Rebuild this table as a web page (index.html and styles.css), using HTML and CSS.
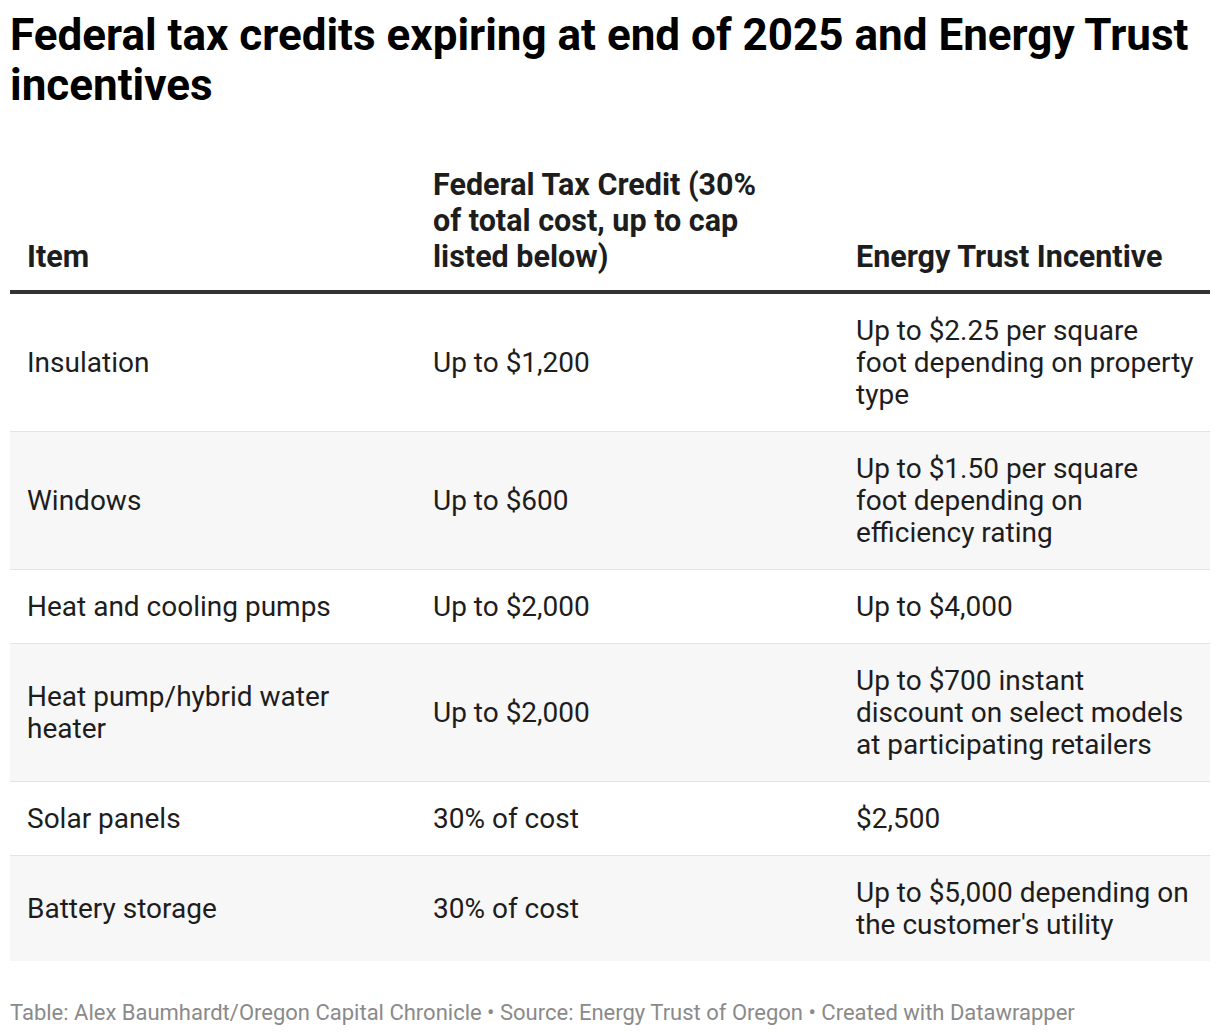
FILE: index.html
```html
<!DOCTYPE html>
<html lang="en">
<head>
<meta charset="utf-8">
<title>Federal tax credits expiring at end of 2025 and Energy Trust incentives</title>
<link rel="stylesheet" href="styles.css">
</head>
<body>
<div class="chart">
  <h1 class="title">Federal tax credits expiring at end of 2025 and Energy Trust incentives</h1>
  <div class="table">
    <div class="row head">
      <div class="cell c1">Item</div>
      <div class="cell c2"><span class="wrap">Federal Tax Credit (30% of total cost, up to cap listed below)</span></div>
      <div class="cell c3">Energy Trust Incentive</div>
    </div>
    <div class="row">
      <div class="cell c1">Insulation</div>
      <div class="cell c2">Up to $1,200</div>
      <div class="cell c3">Up to $2.25 per square foot depending on property type</div>
    </div>
    <div class="row alt">
      <div class="cell c1">Windows</div>
      <div class="cell c2">Up to $600</div>
      <div class="cell c3">Up to $1.50 per square foot depending on efficiency rating</div>
    </div>
    <div class="row">
      <div class="cell c1">Heat and cooling pumps</div>
      <div class="cell c2">Up to $2,000</div>
      <div class="cell c3">Up to $4,000</div>
    </div>
    <div class="row alt">
      <div class="cell c1">Heat pump/hybrid water heater</div>
      <div class="cell c2">Up to $2,000</div>
      <div class="cell c3">Up to $700 instant discount on select models at participating retailers</div>
    </div>
    <div class="row">
      <div class="cell c1">Solar panels</div>
      <div class="cell c2">30% of cost</div>
      <div class="cell c3">$2,500</div>
    </div>
    <div class="row alt last">
      <div class="cell c1">Battery storage</div>
      <div class="cell c2">30% of cost</div>
      <div class="cell c3">Up to $5,000 depending on the customer's utility</div>
    </div>
  </div>
  <div class="footer">Table: Alex Baumhardt/Oregon Capital Chronicle • Source: Energy Trust of Oregon • Created with Datawrapper</div>
</div>
</body>
</html>
```
FILE: styles.css
```css
html, body {
  margin: 0;
  padding: 0;
  background: #ffffff;
}
body {
  font-family: Roboto, "Liberation Sans", Arial, sans-serif;
  color: #1d1d1d;
}
.chart {
  padding: 10px 10px 0 10px;
  width: 1200px;
}
.title {
  margin: 0;
  font-size: 44px;
  line-height: 50px;
  font-weight: 700;
  color: #000000;
}
.table {
  margin-top: 57px;
  display: flex;
  flex-direction: column;
}
.row {
  display: grid;
  grid-template-columns: 406px 423px 371px;
  align-items: center;
  border-bottom: 1px solid #e4e4e4;
  font-size: 28px;
  line-height: 32px;
}
.row.alt {
  background: #f7f7f7;
}
.row.last {
  border-bottom: none;
}
.row.head {
  align-items: end;
  font-size: 30.5px;
  font-weight: 700;
  line-height: 36px;
  border-bottom: 4px solid #333333;
  padding-bottom: 15px;
}
.row.head .cell {
  padding-top: 0;
  padding-bottom: 0;
}
.cell {
  padding: 20.5px 17px 20.5px 17px;
}
.cell.c3 {
  padding-right: 15.5px;
}
.wrap {
  display: block;
  max-width: 350px;
}
.footer {
  margin-top: 39px;
  font-size: 22px;
  line-height: 26px;
  color: #8a8a8a;
}
```
